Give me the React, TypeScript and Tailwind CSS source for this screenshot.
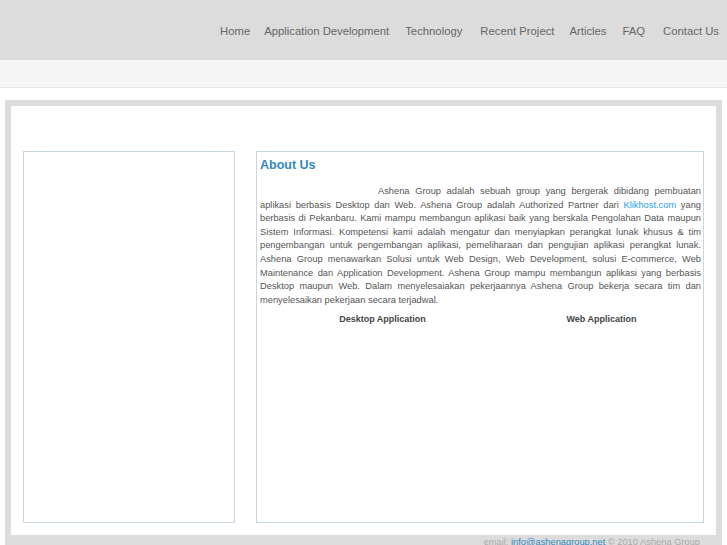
import React from "react";

const lines = [
  "aplikasi berbasis Desktop dan Web. Ashena Group adalah Authorized Partner dari",
  "berbasis di Pekanbaru. Kami mampu membangun aplikasi baik yang berskala Pengolahan Data maupun",
  "Sistem Informasi. Kompetensi kami adalah mengatur dan menyiapkan perangkat lunak khusus & tim",
  "pengembangan untuk pengembangan aplikasi, pemeliharaan dan pengujian aplikasi perangkat lunak.",
  "Ashena Group menawarkan Solusi untuk Web Design, Web Development, solusi E-commerce, Web",
  "Maintenance dan Application Development. Ashena Group mampu membangun aplikasi yang berbasis",
  "Desktop maupun Web. Dalam menyelesaiakan pekerjaannya Ashena Group bekerja secara tim dan",
];

export default function App() {
  return (
    <div className="min-h-[545px] bg-white font-['Liberation_Sans',Arial,sans-serif] overflow-hidden">
      <header className="h-[60px] bg-[#dcdcdc] flex items-center justify-end pr-[8px] pt-[2px] text-[11.3px] text-[#666]">
        <span>Home</span>
        <span className="ml-[14px]">Application Development</span>
        <span className="ml-[16px]">Technology</span>
        <span className="ml-[18px]">Recent Project</span>
        <span className="ml-[15px]">Articles</span>
        <span className="ml-[16px]">FAQ</span>
        <span className="ml-[18px]">Contact Us</span>
      </header>
      <div className="h-[28px] bg-[#f5f5f5] border-b border-[#e6e6e6]" />
      <div className="mt-[12px] mx-[5px] bg-[#dcdcdc] px-[6px] pt-[6px] pb-[10px]">
        <div className="bg-white pt-[45px] pl-[12px] pr-[10px] pb-[12px] flex gap-[21px]">
          <div className="w-[212px] shrink-0 h-[372px] border border-[#c9d6e3]" />
          <div className="w-[448px] shrink-0 h-[372px] overflow-hidden border border-[#c9d6e3] pl-[3px] pr-[2px] pt-[5px]">
            <h2 className="text-[12.5px] font-bold text-[#3189bd] leading-[16px]">About Us</h2>
            <div className="mt-[12px] text-[9.3px] leading-[13.6px] text-[#555] whitespace-nowrap">
              <div className="pl-[118px] text-justify [text-align-last:justify]">
                Ashena Group adalah sebuah group yang bergerak dibidang pembuatan
              </div>
              <div className="text-justify [text-align-last:justify]">
                {lines[0]} <span className="text-[#1fa0f0]">Klikhost.com</span> yang
              </div>
              {lines.slice(1).map((l, i) => (
                <div key={i} className="text-justify [text-align-last:justify]">
                  {l}
                </div>
              ))}
              <div>menyelesaikan pekerjaan secara terjadwal.</div>
            </div>
            <div className="mt-[5px] ml-[13px] grid grid-cols-[219px_219px] text-[9px] font-bold text-[#444] leading-[14px]">
              <div className="text-center">Desktop Application</div>
              <div className="text-center">Web Application</div>
            </div>
          </div>
        </div>
        <div className="pt-[1px] pr-[16px] text-right text-[9.3px] text-[#aaa] leading-[12px]">
          email: <span className="text-[#3189bd] underline">info@ashenagroup.net</span> © 2010 Ashena Group
        </div>
      </div>
    </div>
  );
}
